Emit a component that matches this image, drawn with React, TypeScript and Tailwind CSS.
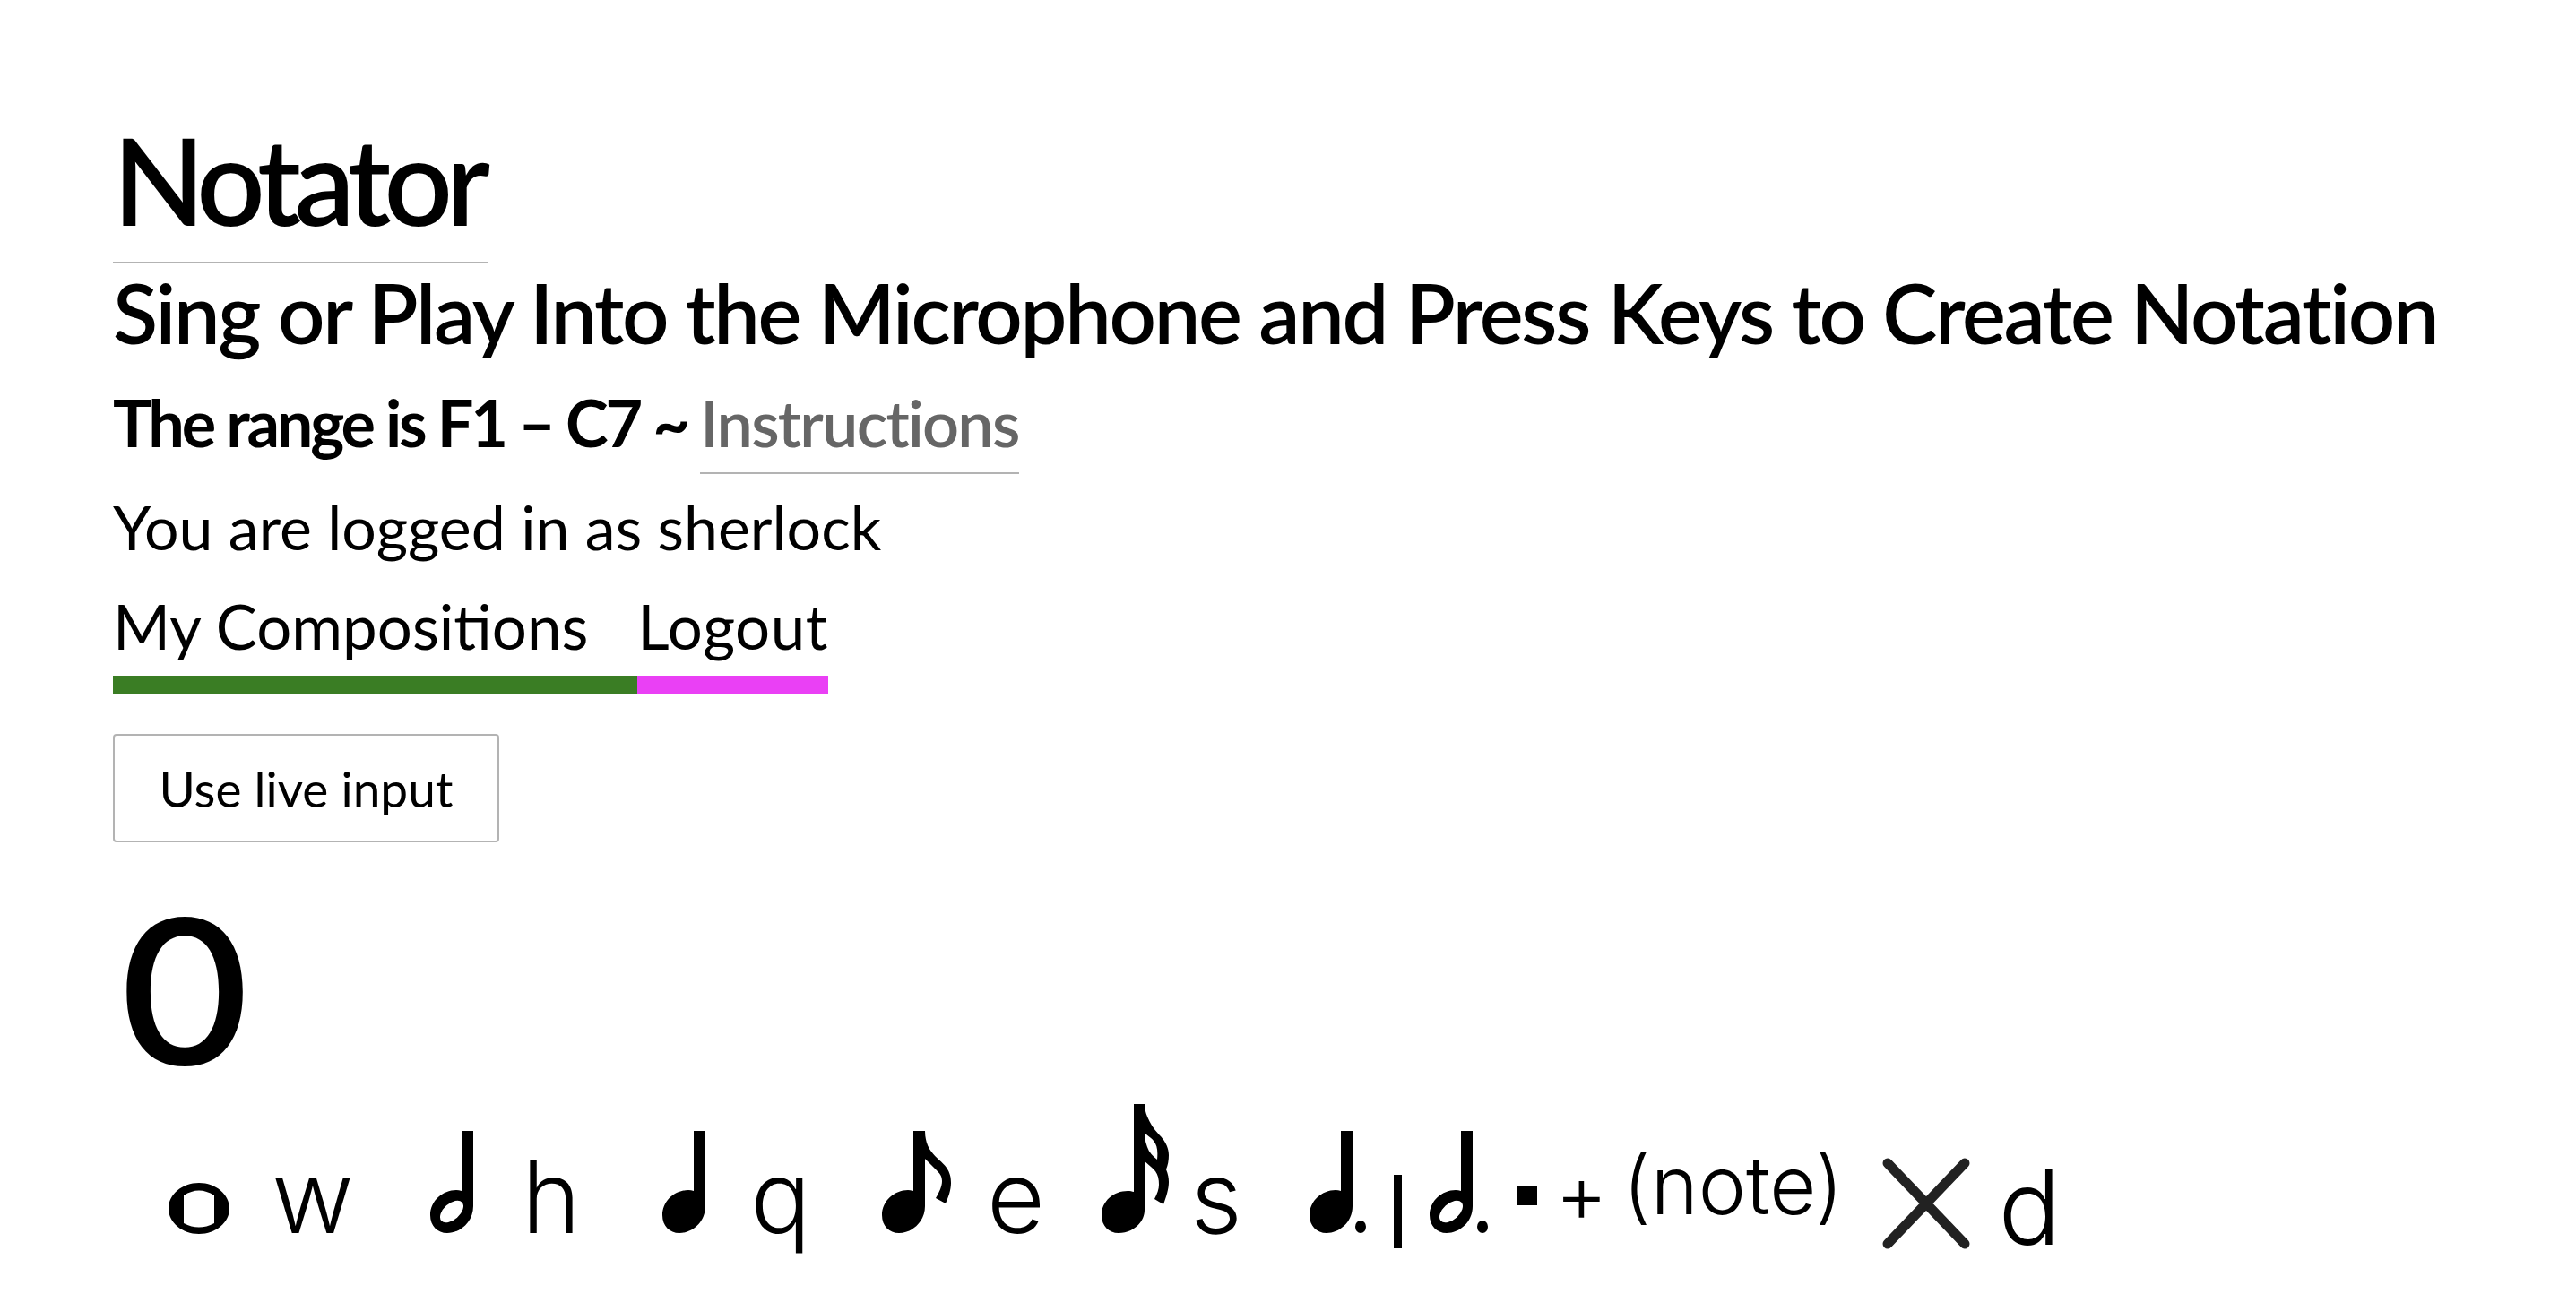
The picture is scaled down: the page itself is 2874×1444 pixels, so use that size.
const Head = "M35 0H48V84C48 102 33 114 19 114C8 114 0 106 0 94C0 78 14 66 29 66C31 66 33 66.5 35 67Z";

function WholeNote() {
  return (
    <svg className="block mt-[113px] ml-[62px] shrink-0" width="68" height="57" viewBox="0 0 68 57">
      <path fillRule="evenodd" d="M34 0C53 0 68 13 68 28.500C68 44 53 57 34 57C15 57 0 44 0 28.500C0 13 15 0 34 0ZM17 14V45Q34 54 51 45V14Q34 3 17 14Z" fill="#000" />
    </svg>
  );
}

function QuarterNote({ className, dot }: { className: string; dot?: boolean }) {
  return (
    <svg className={`block shrink-0 ${className}`} width={dot ? 63 : 48} height="114" viewBox={dot ? "0 0 63 114" : "0 0 48 114"}>
      <path d={Head} fill="#000" />
      {dot && <ellipse cx="57" cy="107" rx="6" ry="7" fill="#000" />}
    </svg>
  );
}

function HalfNote({ className, dot }: { className: string; dot?: boolean }) {
  return (
    <svg className={`block shrink-0 ${className}`} width={dot ? 65 : 48} height="114" viewBox={dot ? "0 0 65 114" : "0 0 48 114"}>
      <path d={Head} fill="#000" />
      <ellipse cx="24" cy="90" rx="15.500" ry="9" transform="rotate(-42 24 90)" fill="#fff" />
      {dot && <ellipse cx="59" cy="107" rx="6" ry="7" fill="#000" />}
    </svg>
  );
}

function EighthNote() {
  return (
    <svg className="block shrink-0 mt-[55px] ml-[86px]" width="78" height="114" viewBox="0 0 78 114">
      <path d={Head} fill="#000" />
      <path d="M46 0H48C48 10 51 18 55 23C60 30 68 35 72 41C76 47 77 52 77 58C77 66 74 74 71 81L60 75C64 68 67 62 67 56C67 50 64 47 60 43L46 29Z" fill="#000" />
    </svg>
  );
}

function SixteenthNote() {
  return (
    <svg className="block shrink-0 mt-[25px] ml-[68px]" width="76" height="144" viewBox="0 0 76 144">
      <path d="M36 0H48V118C48 133 34 144 19 144C8 144 0 136 0 124C0 108 14 97 29 97C32 97 34 97.500 36 98Z" fill="#000" />
      <path
        fillRule="evenodd"
        d="M46 0H48C48 5 49 9 51 14C54 21 58 28 64 34C70 40 75 48 75 57C75 63 74 68 72 73C74 78 75 82 75 87C75 95 72 104 69 112L59 106C62 100 64 95 64 90C64 84 63 79 60 75C56 70 50 66 46 62ZM48 32C48 38 49 43 51 48C53 54 57 58 62 62C63 52 62 46 58 41C56 38 52 36 48 32Z"
        fill="#000"
      />
    </svg>
  );
}

export default function App() {
  return (
    <div className="min-h-screen bg-white pl-[126px] pt-[126px] font-[Lato,sans-serif] text-black overflow-hidden">
      <h1 className="inline-block text-[134px] leading-[150px] font-semibold tracking-[-7.5px] pr-[5px] pb-[16px] border-b-2 border-[#b3b3b3]">
        Notator
      </h1>
      <h2 className="mt-[5px] text-[92px] leading-[100px] font-semibold tracking-[-2.3px] whitespace-nowrap">
        Sing or Play Into the Microphone and Press Keys to Create Notation
      </h2>
      <h3 className="mt-[32px] flex items-baseline text-[72px] leading-[80px] font-bold tracking-[-3.2px] whitespace-pre">
        <span>The range is F1 – C7 ~ </span>
        <a className="pb-[16px] border-b-2 border-[#b3b3b3] text-[#666666] font-semibold tracking-[-1.8px]">Instructions</a>
      </h3>
      <p className="mt-[22px] text-[68px] leading-[74px]">You are logged in as sherlock</p>
      <div className="mt-[35px] flex text-[69px] leading-[78px]">
        <a className="pb-[16px] border-b-[20px] border-[#3a7d24] pr-[55px]">My Compositions</a>
        <a className="pb-[16px] border-b-[20px] border-[#ea40f5] tracking-[0.5px]">Logout</a>
      </div>
      <button className="mt-[45px] block w-[431px] h-[121px] rounded border-2 border-[#b3b3b3] bg-white text-[55px] leading-[64px]">
        Use live input
      </button>
      <div className="mt-[67px] ml-[2px] origin-left scale-x-[1.08] font-[Inter,sans-serif] font-medium text-[224px] leading-[200px]">0</div>
      <div className="flex items-start font-[Inter,sans-serif] font-light text-[112px] leading-[120px]">
        <WholeNote />
        <span className="mt-[68px] ml-[53px] w-[80px] flex justify-center">w</span>
        <HalfNote className="mt-[55px] ml-[91px]" />
        <span className="mt-[68px] ml-[63px] w-[48px] flex justify-center">h</span>
        <QuarterNote className="mt-[55px] ml-[100px]" />
        <span className="mt-[68px] ml-[57px] w-[54px] flex justify-center">q</span>
        <EighthNote />
        <span className="mt-[68px] ml-[44px] w-[55px] flex justify-center">e</span>
        <SixteenthNote />
        <span className="mt-[68px] ml-[30px] w-[44px] flex justify-center">s</span>
        <QuarterNote className="mt-[55px] ml-[82px]" dot />
        <div className="mt-[104px] ml-[31px] w-[9px] h-[82px] bg-black" />
        <HalfNote className="mt-[55px] ml-[31px]" dot />
        <div className="mt-[117px] ml-[33px] w-[22px] h-[21px] bg-black" />
        <span className="mt-[80px] ml-[29px] w-[41px] flex justify-center text-[90px] leading-[90px]">+</span>
        <span className="mt-[71px] ml-[32px] w-[233px] flex justify-center text-[90px] leading-[90px]">(note)</span>
        <svg className="block shrink-0 mt-[85px] ml-[50px]" width="98" height="102" viewBox="0 0 98 102">
          <path d="M6 6L92 96M92 6L6 96" stroke="#222" strokeWidth="11" strokeLinecap="round" />
        </svg>
        <span className="mt-[80px] ml-[38px] w-[57px] flex justify-center text-[116px]">d</span>
      </div>
    </div>
  );
}
